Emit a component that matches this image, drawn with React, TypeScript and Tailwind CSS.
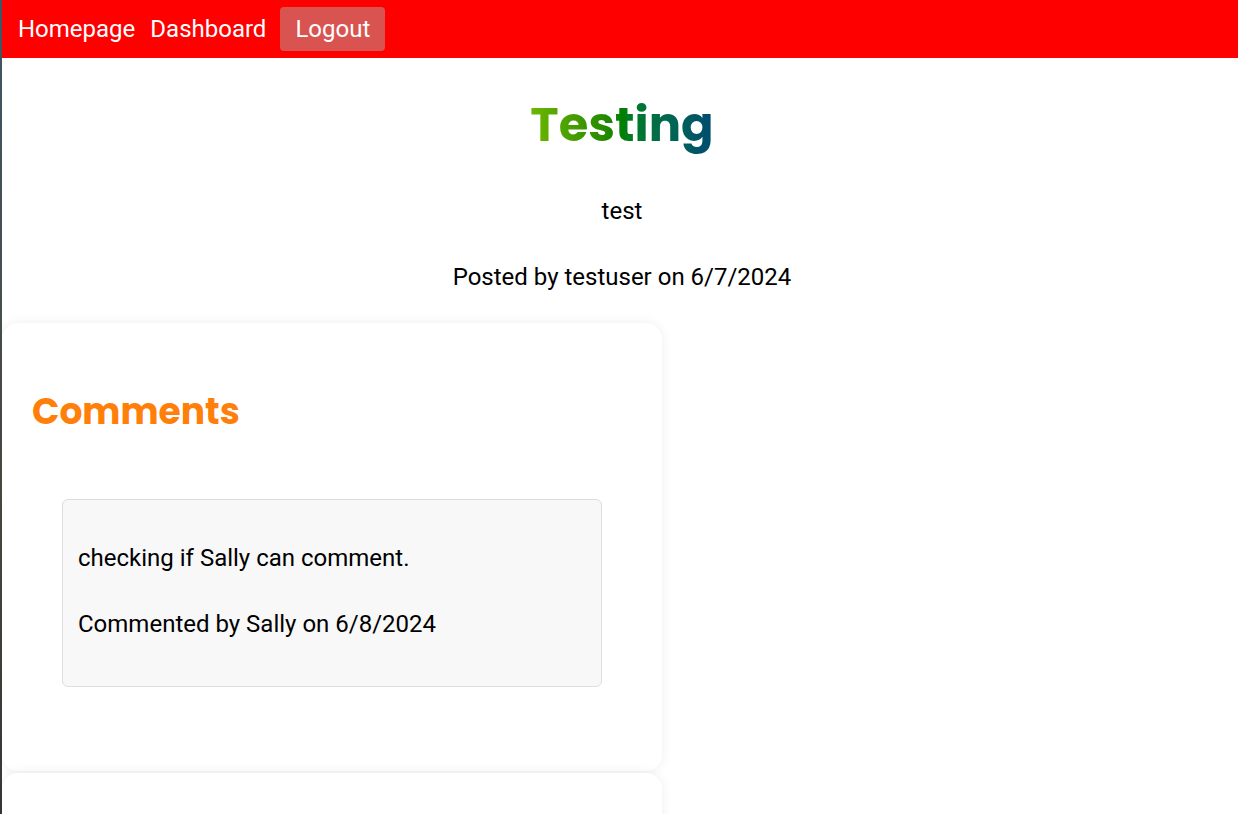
export default function App() {
  return (
    <div className="flex min-h-[814px] w-full bg-white" style={{ fontFamily: "Roboto, 'Liberation Sans', sans-serif" }}>
      <div className="w-[2px] shrink-0 bg-gradient-to-b from-[#3f5566] via-[#4a4a42] to-[#2e2e2e]" />
      <div className="flex-1 min-w-0 flex flex-col text-black">
        <nav className="h-[58px] bg-[#ff0000] flex items-center gap-[15px] pl-4 text-white text-[24px]">
          <a className="leading-none">Homepage</a>
          <a className="leading-none">Dashboard</a>
          <button className="h-[44px] px-[15px] rounded-[4px] bg-[#d95450] text-[24px] leading-none -ml-px">Logout</button>
        </nav>
        <div className="flex flex-col items-center pt-[31px] pl-[4px]">
          <h1
            className="text-[48px] font-bold leading-[72px] bg-gradient-to-r from-[#6cb800] via-[#008000] to-[#004a70] bg-clip-text text-transparent"
            style={{ fontFamily: "Poppins, 'Open Sans', sans-serif" }}
          >
            Testing
          </h1>
          <p className="text-[24px] leading-[28px] mt-[36px]">test</p>
          <p className="text-[24px] leading-[28px] mt-[38px]">Posted by testuser on 6/7/2024</p>
        </div>
        <div className="mt-[32px] w-[660px] rounded-[16px] bg-white shadow-[0_0_12px_rgba(0,0,0,0.07)] px-[30px] pt-[62px] pb-[84px]">
          <h2
            className="text-[36px] font-bold leading-[54px] text-[#ff7f0a]"
            style={{ fontFamily: "Poppins, 'Open Sans', sans-serif" }}
          >
            Comments
          </h2>
          <div className="mt-[60px] ml-[30px] w-[540px] rounded-[6px] border border-[#dddddd] bg-[#f8f8f8] px-[15px] pt-[44px] pb-[48px] text-[24px] leading-[28px]">
            <p>checking if Sally can comment.</p>
            <p className="mt-[38px]">Commented by Sally on 6/8/2024</p>
          </div>
        </div>
        <div className="mt-[2px] w-[660px] h-[200px] rounded-[16px] bg-white shadow-[0_0_12px_rgba(0,0,0,0.07)]" />
      </div>
    </div>
  );
}
